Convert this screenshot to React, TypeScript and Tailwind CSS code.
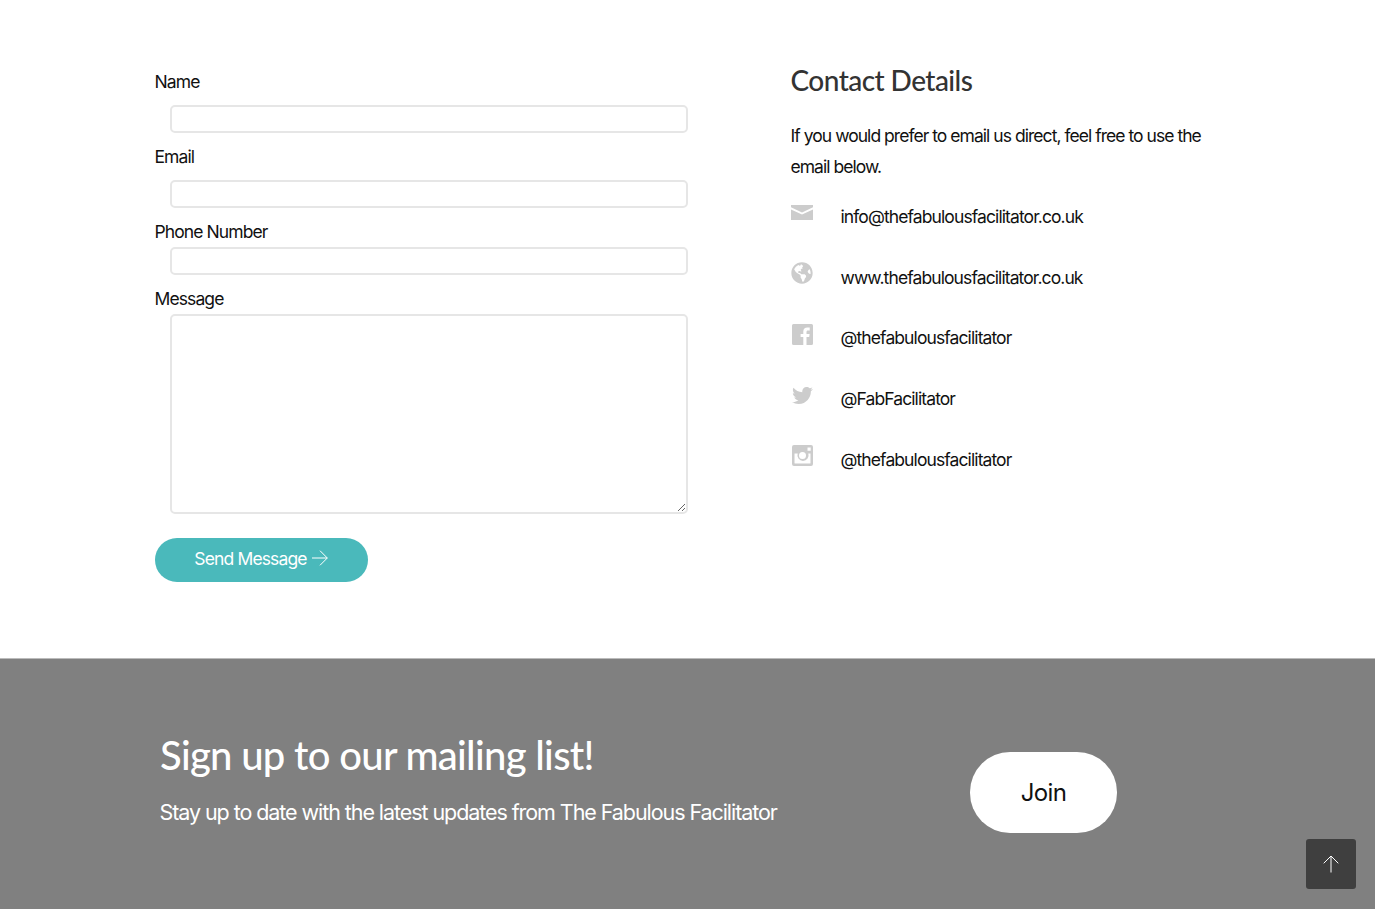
import { FaGlobeAmericas, FaTwitter } from 'react-icons/fa'

const inputClass = 'ml-[15px] block h-[28px] w-[518px] rounded-[5px] border-2 border-[#e6e6e6] bg-white outline-none'
const labelClass = 'ml-[-0.5px] block h-[27px] text-[17.5px] leading-[27px] tracking-[-0.9px] text-[#111]'

function MailIcon() {
  return (
    <svg viewBox="0 0 22 15" className="h-[15px] w-[22px]" fill="#cccccc">
      <path d="M0 0h22v2.2l-11 5.2L0 2.2z" />
      <path d="M0 4.4l11 5.2 11-5.2V15H0z" />
    </svg>
  )
}

function FacebookIcon() {
  return (
    <svg viewBox="0 0 21 21" className="ml-[1px] h-[21px] w-[21px]" fill="#cccccc">
      <path d="M1.500 0h18A1.500 1.500 0 0 1 21 1.500v18a1.500 1.500 0 0 1-1.500 1.500h-5v-8h2.700l.4-3.100h-3.100V7.900c0-.9.300-1.500 1.600-1.500h1.600V3.600c-.3 0-1.300-.1-2.400-.1-2.400 0-4 1.400-4 4.100v2.300H8.600V13h2.700v8H1.500A1.500 1.500 0 0 1 0 19.500v-18A1.500 1.500 0 0 1 1.500 0z" />
    </svg>
  )
}

function InstagramIcon() {
  return (
    <svg viewBox="0 0 21 21" className="ml-[1px] h-[21px] w-[21px]" fill="#cccccc">
      <path
        fillRule="evenodd"
        d="M2 0h17a2 2 0 0 1 2 2v17a2 2 0 0 1-2 2H2a2 2 0 0 1-2-2V2a2 2 0 0 1 2-2zm13.500 2.500v3.200h3.200V2.500zM2.500 8.500V18a.6.6 0 0 0 .6.6h14.800a.6.600 0 0 0 .6-.6V8.500h-2.200a5.600 5.600 0 1 1-10.600 0zM10.500 7a3.500 3.500 0 1 0 0 7 3.500 3.500 0 0 0 0-7z"
      />
    </svg>
  )
}

const contacts = [
  { icon: <MailIcon />, text: 'info@thefabulousfacilitator.co.uk', iconClass: 'pt-[7px]' },
  { icon: <FaGlobeAmericas className="h-[22px] w-[22px] text-[#cccccc]" />, text: 'www.thefabulousfacilitator.co.uk', iconClass: 'pt-[3px]' },
  { icon: <FacebookIcon />, text: '@thefabulousfacilitator', iconClass: 'pt-[5px]' },
  { icon: <FaTwitter className="ml-[1px] h-[21px] w-[21px] text-[#cccccc]" />, text: '@FabFacilitator', iconClass: 'pt-[5px]' },
  { icon: <InstagramIcon />, text: '@thefabulousfacilitator', iconClass: 'pt-[4px]' },
]

export default function App() {
  return (
    <div className="relative h-[909px] overflow-hidden bg-white font-['Inter',sans-serif]">
      <section className="flex h-[658px] pl-[155px] pt-[68px]">
        <form className="w-[635.5px]">
          <label className={labelClass}>Name</label>
          <input className={`${inputClass} mt-[10px]`} />
          <label className={`${labelClass} mt-[10px]`}>Email</label>
          <input className={`${inputClass} mt-[10px]`} />
          <label className={`${labelClass} mt-[10px]`}>Phone Number</label>
          <input className={`${inputClass} mt-[2px]`} />
          <label className={`${labelClass} mt-[10px]`}>Message</label>
          <textarea className={`${inputClass} mt-[2px] !h-[200px] resize-y`} />
          <button
            type="button"
            className="mt-[24px] flex h-[44px] w-[213px] items-center justify-center gap-[5px] rounded-full bg-[#4ab9bb] pb-[2px] pr-[1px] text-[17.5px] tracking-[-0.85px] text-white"
          >
            Send Message
            <svg viewBox="0 0 16 16" className="mt-[-2px] h-[16px] w-[16px]" fill="none" stroke="white" strokeWidth="1">
              <path d="M0 8h15.300M8 .7 15.300 8 8 15.300" />
            </svg>
          </button>
        </form>
        <div className="w-[430px]">
          <h2 className="mt-[-6px] font-['Lato',sans-serif] text-[28px] leading-[36px] font-medium tracking-[-0.55px] text-[#333]">Contact Details</h2>
          <p className="mt-[22px] text-[17.5px] leading-[31px] tracking-[-0.96px] text-[#111]">
            If you would prefer to email us direct, feel free to use the email below.
          </p>
          <ul className="mt-[16px]">
            {contacts.map((item, i) => (
              <li key={i} className="flex h-[60.7px] items-start">
                <span className={`w-[50px] shrink-0 ${item.iconClass}`}>{item.icon}</span>
                <span className="pt-[5px] text-[17.5px] leading-[27px] tracking-[-0.9px] text-[#111]">{item.text}</span>
              </li>
            ))}
          </ul>
        </div>
      </section>

      <section className="flex h-[251px] border-t border-[#bbb] bg-[#808080] pl-[160px] text-white">
        <div className="w-[810px] pt-[70px]">
          <h2 className="font-['Lato',sans-serif] text-[40px] leading-[52px] font-medium tracking-[-0.7px]">Sign up to our mailing list!</h2>
          <p className="ml-[-0.5px] mt-[15px] text-[21.5px] leading-[33px] tracking-[-1.07px]">Stay up to date with the latest updates from The Fabulous Facilitator</p>
        </div>
        <div className="pt-[93px]">
          <button type="button" className="h-[81px] w-[147px] rounded-[40px] bg-white pt-[1px] text-[24px] tracking-[-0.6px] text-[#111]">
            Join
          </button>
        </div>
      </section>

      <button type="button" className="absolute right-[19px] bottom-[20px] flex h-[50px] w-[50px] items-center justify-center rounded-[3px] bg-[#3f3f3f]">
        <svg viewBox="0 0 16 18" className="h-[18px] w-[16px]" fill="none" stroke="white" strokeWidth="1">
          <path d="M8 17.500V1M.7 8.300 8 1l7.300 7.300" />
        </svg>
      </button>
    </div>
  )
}
